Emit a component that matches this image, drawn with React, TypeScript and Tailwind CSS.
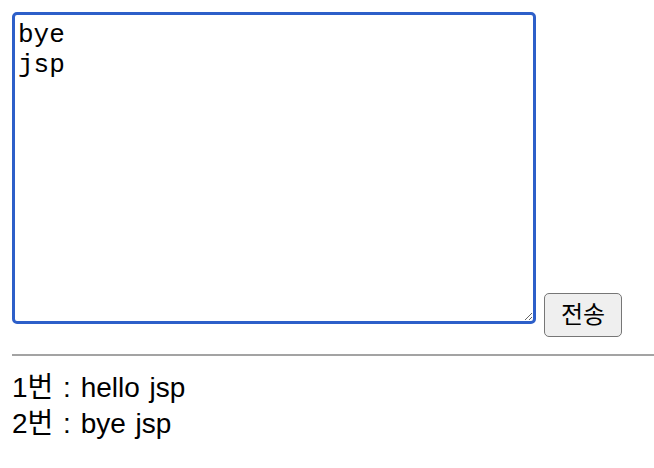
export default function App() {
  return (
    <div className="bg-white w-[654px] h-[468px] pt-3 pl-3 font-['Liberation_Sans','Noto_Sans_CJK_KR',sans-serif] text-black">
      <div className="flex items-end gap-2">
        <textarea
          defaultValue={"bye\njsp"}
          className="w-[524px] h-[312px] mb-[13px] border-[3px] border-[#2d5fc9] rounded-[5px] px-[3px] pt-[5px] font-['Liberation_Mono',monospace] text-[26px] leading-[30px] outline-none"
        />
        <button className="w-[78px] h-[44px] border-[1.5px] border-[#767676] rounded-[5px] bg-[#efefef] text-[24px] leading-none">
          전송
        </button>
      </div>
      <hr className="mt-[17px] border-t-2 border-[#a3a3a3]" />
      <div className="mt-[14px] text-[28px] leading-[36px] [word-spacing:2px]">
        <p>1번 : hello jsp</p>
        <p>2번 : bye jsp</p>
      </div>
    </div>
  );
}
